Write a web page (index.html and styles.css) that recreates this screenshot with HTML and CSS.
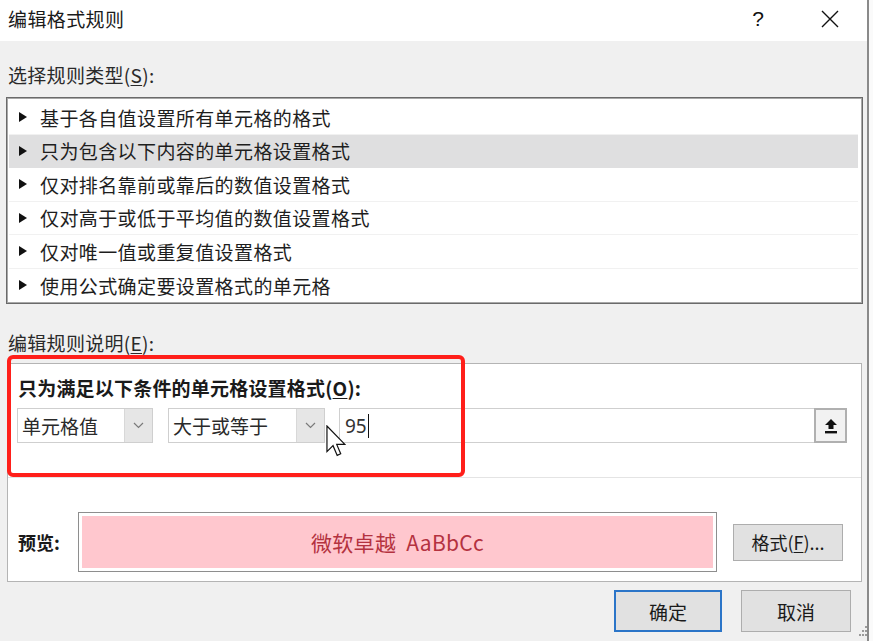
FILE: index.html
```html
<!DOCTYPE html>
<html lang="zh-CN">
<head>
<meta charset="utf-8">
<title>编辑格式规则</title>
<link rel="stylesheet" href="styles.css">
</head>
<body>
<div class="window">
  <div class="titlebar">
    <div class="title">编辑格式规则</div>
    <div class="tb-help">?</div>
    <div class="tb-close">
      <svg width="18" height="18" viewBox="0 0 18 18"><path d="M1 1 L17 17 M17 1 L1 17" stroke="#111" stroke-width="1.4" fill="none"/></svg>
    </div>
  </div>
  <div class="content">
    <div class="label label-top">选择规则类型(<u>S</u>):</div>
    <div class="listbox">
      <div class="row"><span class="tri"></span><span class="row-text">基于各自值设置所有单元格的格式</span></div>
      <div class="row selected"><span class="tri"></span><span class="row-text">只为包含以下内容的单元格设置格式</span></div>
      <div class="row"><span class="tri"></span><span class="row-text">仅对排名靠前或靠后的数值设置格式</span></div>
      <div class="row"><span class="tri"></span><span class="row-text">仅对高于或低于平均值的数值设置格式</span></div>
      <div class="row"><span class="tri"></span><span class="row-text">仅对唯一值或重复值设置格式</span></div>
      <div class="row last"><span class="tri"></span><span class="row-text">使用公式确定要设置格式的单元格</span></div>
    </div>
    <div class="label label-desc">编辑规则说明(<u>E</u>):</div>
    <div class="panel">
      <div class="heading">只为满足以下条件的单元格设置格式(<u>O</u>):</div>
      <div class="controls">
        <div class="combo combo-type">
          <span class="combo-text">单元格值</span>
          <span class="combo-btn"><svg width="11" height="7" viewBox="0 0 11 7"><polyline points="1,1 5.5,5.5 10,1" fill="none" stroke="#7a7a7a" stroke-width="1.2"/></svg></span>
        </div>
        <div class="combo combo-op">
          <span class="combo-text">大于或等于</span>
          <span class="combo-btn"><svg width="11" height="7" viewBox="0 0 11 7"><polyline points="1,1 5.5,5.5 10,1" fill="none" stroke="#7a7a7a" stroke-width="1.2"/></svg></span>
        </div>
        <div class="input-group">
          <div class="input"><span class="input-text">95</span><span class="caret"></span></div>
          <div class="ref-btn">
            <svg width="14" height="16" viewBox="0 0 14 16"><path d="M7 1 L13 7 L9.5 7 L9.5 11 L4.5 11 L4.5 7 L1 7 Z" fill="#111"/><rect x="1" y="13" width="12" height="2.4" fill="#111"/></svg>
          </div>
        </div>
      </div>
      <div class="sep"></div>
      <div class="preview-row">
        <div class="preview-label">预览:</div>
        <div class="preview-box"><div class="preview-inner">微软卓越&nbsp; AaBbCc</div></div>
        <div class="btn fmt-btn">格式(<u>F</u>)...</div>
      </div>
    </div>
    <div class="actions">
      <div class="btn ok">确定</div>
      <div class="btn cancel">取消</div>
    </div>
  </div>
  <div class="highlight"></div>
  <svg class="cursor" width="20" height="32" viewBox="0 0 12.5 20"><path d="M0.6 0.6 L0.6 16.6 L4.4 12.9 L7 19 L9.2 18 L6.7 12.1 L11.8 12.1 Z" fill="#fff" stroke="#111" stroke-width="0.75" stroke-linejoin="miter"/></svg>
  <svg class="grip" width="10" height="14" viewBox="0 0 10 14"><g fill="#9a9a9a"><rect x="7" y="1" width="2" height="2"/><rect x="4" y="5" width="2" height="2"/><rect x="7" y="5" width="2" height="2"/><rect x="1" y="9" width="2" height="2"/><rect x="4" y="9" width="2" height="2"/><rect x="7" y="9" width="2" height="2"/></g></svg>
</div>
</body>
</html>
```

FILE: styles.css
```css
* { box-sizing: border-box; }
html, body { margin: 0; padding: 0; }
body {
  width: 873px;
  height: 641px;
  background: #fafafa;
  font-family: "Noto Sans CJK SC", "Noto Sans", sans-serif;
  color: #1e1e1e;
  overflow: hidden;
}
u { text-decoration: underline; text-underline-offset: 2px; }

.window {
  position: relative;
  width: 869px;
  height: 641px;
  border-right: 2px solid #8a8a8a;
  background: #f0f0f0;
}

/* title bar */
.titlebar {
  height: 41px;
  background: #fff;
  display: flex;
  align-items: center;
  padding: 0 27px 4px 8px;
}
.title { flex: 1; font-size: 19px; letter-spacing: 0.4px; color: #1a1a1a; }
.tb-help { width: 24px; text-align: center; font-size: 21px; font-family: "Liberation Sans", sans-serif; margin-right: 50px; color: #111; }
.tb-close { width: 20px; height: 18px; display: flex; align-items: center; justify-content: center; }

.content { padding-top: 22px; }

.label {
  height: 24px;
  line-height: 24px;
  font-size: 19px;
  letter-spacing: 0.3px;
  margin-left: 8px;
  color: #2a2a2a;
}

/* list box */
.listbox {
  margin: 10px 0 0 6px;
  width: 857px;
  height: 207px;
  border: 1px solid #6a6a6a;
  box-shadow: inset 0 0 0 1px #a8a8a8;
  background: #fff;
  padding: 3px 4px 0 2px;
}
.row {
  height: 33.5px;
  display: flex;
  align-items: center;
  padding-left: 10px;
  font-size: 19px;
  letter-spacing: 0.4px;
  color: #1e1e1e;
  border-bottom: 1px solid #f1f1f1;
}
.row.last { border-bottom: none; }
.row.selected { background: #dfdfe0; border-bottom-color: #dfdfe0; }
.tri {
  width: 0; height: 0;
  border-top: 5px solid transparent;
  border-bottom: 5px solid transparent;
  border-left: 8px solid #111;
  margin-right: 13px;
}

.label-desc { margin-top: 27px; }

/* description panel */
.panel {
  margin: 8px 0 0 7px;
  width: 855px;
  height: 219px;
  border: 1px solid #b4b4b4;
  background: #fff;
  padding: 12px 0 0 10px;
}
.heading {
  height: 24px;
  line-height: 24px;
  font-size: 19px;
  font-weight: bold;
  letter-spacing: 0.2px;
  color: #1a1a1a;
}
.controls {
  margin-top: 8px;
  height: 35px;
  display: flex;
  align-items: stretch;
  margin-left: -1px;
}
.combo {
  display: flex;
  border: 1px solid #cfcfcf;
  background: #fff;
}
.combo-type { width: 136px; }
.combo-op { width: 157px; margin-left: 15px; }
.combo-text {
  flex: 1;
  font-size: 19px;
  line-height: 33px;
  padding-left: 4px;
  color: #2a2a2a;
}
.combo-btn {
  width: 28px;
  background: #e6e6e6;
  border-left: 1px solid #d8d8d8;
  display: flex;
  align-items: center;
  justify-content: center;
}
.input-group { display: flex; margin-left: 14px; }
.input {
  width: 475px;
  border: 1px solid #cfcfcf;
  border-right: none;
  display: flex;
  align-items: center;
  padding-left: 5px;
}
.input-text { font-size: 19px; color: #333; font-family: "Noto Sans", sans-serif; }
.caret { width: 1.5px; height: 24px; background: #111; margin-left: 1px; }
.ref-btn {
  width: 33px;
  margin: 0;
  border: 2px solid #b0b0b0;
  background: #f2f2f2;
  display: flex;
  align-items: center;
  justify-content: center;
}
.sep { margin: 34px 0 0 -10px; height: 1px; background: #e4e4e4; width: 853px; }

.preview-row {
  margin-top: 34px;
  height: 60px;
  display: flex;
  align-items: center;
}
.preview-label {
  width: 60px;
  font-size: 18px;
  font-weight: bold;
  color: #1a1a1a;
}
.preview-box {
  width: 639px;
  height: 60px;
  border: 1px solid #8e8e8e;
  padding: 3px;
  background: #fff;
}
.preview-inner {
  height: 100%;
  background: #ffc7ce;
  display: flex;
  align-items: center;
  justify-content: center;
  font-size: 21px;
  color: #b4323f;
  letter-spacing: 0.3px;
}
.btn {
  display: flex;
  align-items: center;
  justify-content: center;
  background: #e1e1e1;
  border: 1px solid #adadad;
  font-size: 18px;
  color: #1a1a1a;
}
.fmt-btn { width: 110px; height: 37px; margin-left: 16px; }

.actions {
  margin-top: 8px;
  height: 42px;
  display: flex;
  justify-content: flex-end;
  padding-right: 16px;
  gap: 19px;
}
.ok { width: 108px; border: 2px solid #2b75c8; font-size: 19px; }
.cancel { width: 110px; font-size: 19px; }

/* overlays */
.highlight {
  position: absolute;
  left: 7px;
  top: 355px;
  width: 458px;
  height: 122px;
  border: 4px solid #ff1f1a;
  border-radius: 6px;
}
.cursor { position: absolute; left: 326px; top: 425px; }
.grip { position: absolute; right: -1px; bottom: 2px; }
```
